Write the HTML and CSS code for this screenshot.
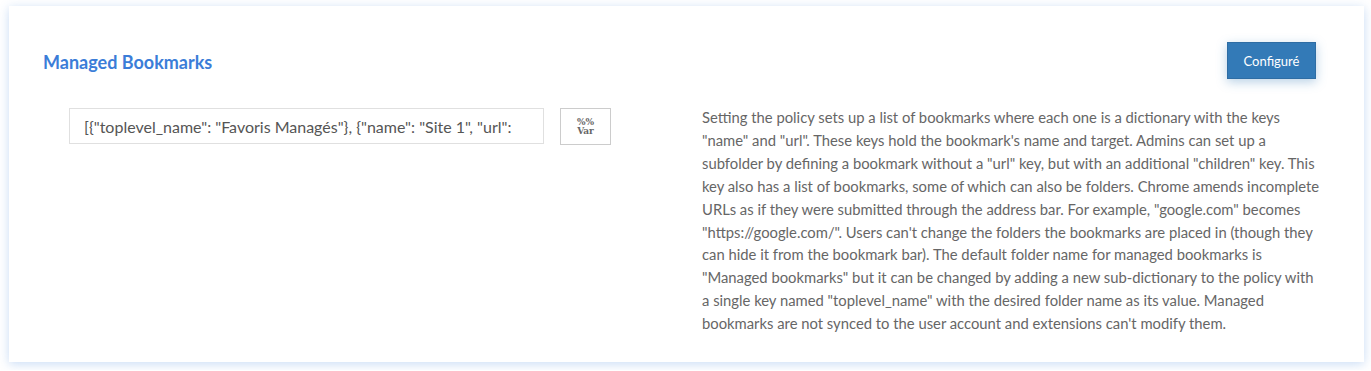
FILE: index.html
```html
<!DOCTYPE html>
<html lang="en">
<head>
    <meta charset="UTF-8">
    <meta name="viewport" content="width=device-width, initial-scale=1.0">
    <title>Managed Bookmarks</title>
    <link rel="stylesheet" href="styles.css">
</head>
<body>
    <div class="policy-card">
        <div class="policy-header">
            <h2>Managed Bookmarks</h2>
            <button class="state-btn">Configuré</button>
        </div>

        <div class="policy-body">
            <div class="policy-value">
                <input type="text" class="value-input" value='[{"toplevel_name": "Favoris Managés"}, {"name": "Site 1", "url":'>
                <button class="var-btn"><span>%%</span><span>Var</span></button>
            </div>
            <p class="policy-desc">Setting the policy sets up a list of bookmarks where each one is a dictionary with the keys "name" and "url". These keys hold the bookmark's name and target. Admins can set up a subfolder by defining a bookmark without a "url" key, but with an additional "children" key. This key also has a list of bookmarks, some of which can also be folders. Chrome amends incomplete URLs as if they were submitted through the address bar. For example, "google.com" becomes "https://google.com/". Users can't change the folders the bookmarks are placed in (though they can hide it from the bookmark bar). The default folder name for managed bookmarks is "Managed bookmarks" but it can be changed by adding a new sub-dictionary to the policy with a single key named "toplevel_name" with the desired folder name as its value. Managed bookmarks are not synced to the user account and extensions can't modify them.</p>
        </div>
    </div>
</body>
</html>
```

FILE: styles.css
```css
:root {
    --title-color: #3b7dd8;
    --btn-color: #337ab7;
    --text-color: #666;
}

body {
    font-family: 'Lato', sans-serif;
    margin: 0;
    padding: 6px 7px 8px 9px;
    background: #fff;
}

.policy-card {
    background: #fff;
    padding: 36px 48px 27px 34px;
    box-shadow: 0 2px 10px rgba(60, 130, 220, 0.28);
}

.policy-header {
    display: flex;
    justify-content: space-between;
    align-items: center;
}

.policy-header h2 {
    margin: 2px 0 0;
    font-size: 18px;
    font-weight: 700;
    color: var(--title-color);
}

.state-btn {
    width: 89px;
    height: 37px;
    background-color: var(--btn-color);
    color: #fff;
    border: 1px solid #2e6da4;
    border-radius: 0;
    font-family: 'Lato', sans-serif;
    font-size: 13px;
    cursor: pointer;
    box-shadow: 0 3px 10px rgba(51, 122, 183, 0.35);
}

.policy-body {
    display: flex;
    margin-top: 29px;
}

.policy-value {
    display: flex;
    align-items: flex-start;
    gap: 16px;
    width: 659px;
    padding-left: 26px;
    box-sizing: border-box;
}

.value-input {
    width: 475px;
    height: 36px;
    box-sizing: border-box;
    padding: 0 14px;
    border: 1px solid #e0e0e0;
    font-family: 'Lato', sans-serif;
    font-size: 16px;
    color: #555;
    outline: none;
}

.var-btn {
    width: 51px;
    height: 37px;
    display: flex;
    flex-direction: column;
    align-items: center;
    justify-content: center;
    background: #fff;
    border: 1px solid #ccc;
    font-family: 'DejaVu Serif', serif;
    font-size: 9px;
    font-weight: 700;
    line-height: 9px;
    color: #666;
    padding: 0;
    cursor: pointer;
}

.policy-desc {
    flex: 1;
    margin: -2px -6px 0 0;
    font-size: 14.8px;
    line-height: 22.9px;
    color: var(--text-color);
}
```
